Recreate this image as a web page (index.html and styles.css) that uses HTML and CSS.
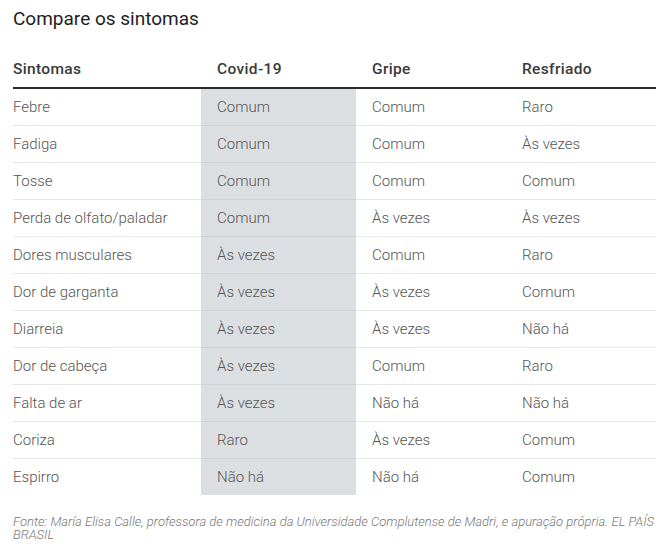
FILE: index.html
```html
<!DOCTYPE html>
<html lang="pt">
<head>
<meta charset="utf-8">
<link rel="stylesheet" href="styles.css">
</head>
<body>
<div class="page">
  <h1 class="title">Compare os sintomas</h1>
  <table class="tbl">
    <colgroup>
      <col class="c1"><col class="c2"><col class="c3"><col class="c4">
    </colgroup>
    <thead>
      <tr><th>Sintomas</th><th>Covid-19</th><th>Gripe</th><th>Resfriado</th></tr>
    </thead>
    <tbody>
      <tr><td>Febre</td><td class="hl">Comum</td><td>Comum</td><td>Raro</td></tr>
      <tr><td>Fadiga</td><td class="hl">Comum</td><td>Comum</td><td>Às vezes</td></tr>
      <tr><td>Tosse</td><td class="hl">Comum</td><td>Comum</td><td>Comum</td></tr>
      <tr><td>Perda de olfato/paladar</td><td class="hl">Comum</td><td>Às vezes</td><td>Às vezes</td></tr>
      <tr><td>Dores musculares</td><td class="hl">Às vezes</td><td>Comum</td><td>Raro</td></tr>
      <tr><td>Dor de garganta</td><td class="hl">Às vezes</td><td>Às vezes</td><td>Comum</td></tr>
      <tr><td>Diarreia</td><td class="hl">Às vezes</td><td>Às vezes</td><td>Não há</td></tr>
      <tr><td>Dor de cabeça</td><td class="hl">Às vezes</td><td>Comum</td><td>Raro</td></tr>
      <tr><td>Falta de ar</td><td class="hl">Às vezes</td><td>Não há</td><td>Não há</td></tr>
      <tr><td>Coriza</td><td class="hl">Raro</td><td>Às vezes</td><td>Comum</td></tr>
      <tr><td>Espirro</td><td class="hl">Não há</td><td>Não há</td><td>Comum</td></tr>
    </tbody>
  </table>
  <p class="note">Fonte: María Elisa Calle, professora de medicina da Universidade Complutense de Madri, e apuração própria. EL PAÍS BRASIL</p>
</div>
</body>
</html>
```
FILE: styles.css
```css
html, body {
  margin: 0;
  padding: 0;
  background: #ffffff;
}
body {
  font-family: Roboto, "Liberation Sans", sans-serif;
}
.page {
  padding: 8px 13px 0 13px;
  width: 643px;
}
.title {
  margin: 0;
  font-size: 19px;
  line-height: 22px;
  font-weight: 400;
  color: #1e1e1e;
}
.tbl {
  margin-top: 28px;
  width: 643px;
  border-collapse: collapse;
  table-layout: fixed;
}
.c1 { width: 188px; }
.c2 { width: 155px; }
.c3 { width: 150px; }
.c4 { width: 150px; }
.tbl th {
  text-align: left;
  font-size: 15.5px;
  line-height: 20px;
  font-weight: 500;
  letter-spacing: 0.35px;
  color: #3a3a3a;
  padding: 1px 0 8px 16px;
  border-bottom: 2px solid #2b2b2b;
}
.tbl td {
  font-size: 15px;
  line-height: 20px;
  font-weight: 300;
  color: #555555;
  padding: 8px 0 8px 16px;
  border-bottom: 1px solid #e7e7e7;
  white-space: nowrap;
}
.tbl th:first-child,
.tbl td:first-child {
  padding-left: 0;
}
.tbl tbody tr:last-child td {
  border-bottom: none;
}
.tbl td.hl {
  background: #dcdfe2;
  border-bottom-color: #cfd2d5;
}
.note {
  margin: 20px 0 0 0;
  font-size: 13px;
  line-height: 13px;
  font-style: italic;
  font-weight: 300;
  color: #777777;
  letter-spacing: 0;
}
```
